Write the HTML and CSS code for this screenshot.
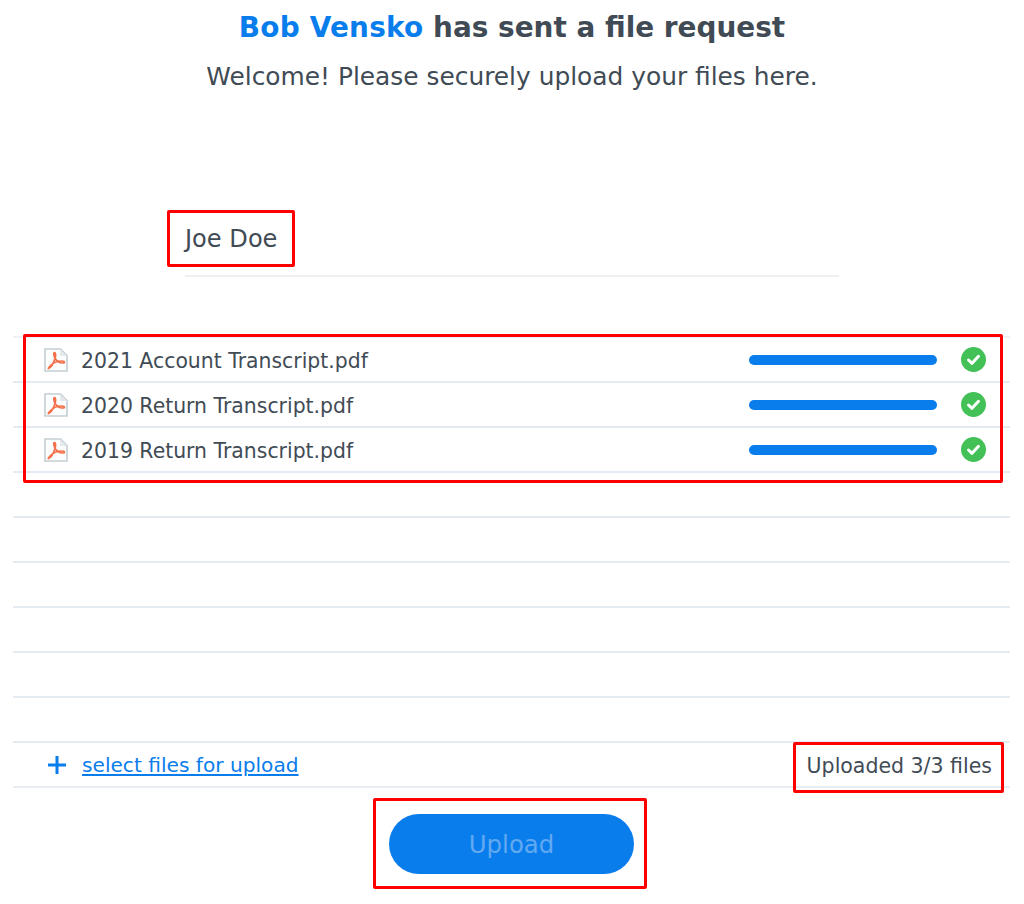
FILE: index.html
```html
<!DOCTYPE html>
<html lang="en">
<head>
    <meta charset="UTF-8">
    <meta name="viewport" content="width=device-width, initial-scale=1.0">
    <title>File request</title>
    <link rel="stylesheet" href="styles.css">
</head>
<body>
    <svg class="sprites" width="0" height="0">
        <symbol id="pdf" viewBox="0 0 24 24">
            <path d="M1 1H16.500L23 7.500V23H1Z" fill="#fcfdfd" stroke="#c3ced3" stroke-width="1.600"/>
            <path d="M16 1V8H23" fill="#e4eaec" stroke="none"/>
            <path d="M4.500 20.500C7 19.500 9.800 14.500 11.300 9.500C11.900 7 11.600 4.500 10.500 4.500C9.400 4.500 9.500 8 11.500 11C13.500 14 16.500 15.500 20 14.800C21 14.300 20 13 18 13C14 13 9 15 6.500 17.500C5 19 3.800 20.800 4.500 20.500Z" fill="none" stroke="#f4704a" stroke-width="1.700"/>
        </symbol>
        <symbol id="done" viewBox="0 0 25 25">
            <circle cx="12.500" cy="12.500" r="12.500" fill="#43c157"/>
            <path d="M7.500 13L11 16.300L17.500 9.300" fill="none" stroke="#fff" stroke-width="3" stroke-linecap="round" stroke-linejoin="round"/>
        </symbol>
    </svg>

    <h1 class="title"><span class="sender">Bob Vensko</span> has sent a file request</h1>
    <p class="welcome">Welcome! Please securely upload your files here.</p>

    <div class="name-field">
        <div class="name-value">Joe Doe</div>
        <div class="mark mark-name"></div>
    </div>

    <div class="file-area">
        <div class="file-row">
            <svg class="file-icon"><use href="#pdf"/></svg>
            <span class="file-name">2021 Account Transcript.pdf</span>
            <span class="progress"></span>
            <svg class="done-icon"><use href="#done"/></svg>
        </div>
        <div class="file-row">
            <svg class="file-icon"><use href="#pdf"/></svg>
            <span class="file-name">2020 Return Transcript.pdf</span>
            <span class="progress"></span>
            <svg class="done-icon"><use href="#done"/></svg>
        </div>
        <div class="file-row">
            <svg class="file-icon"><use href="#pdf"/></svg>
            <span class="file-name">2019 Return Transcript.pdf</span>
            <span class="progress"></span>
            <svg class="done-icon"><use href="#done"/></svg>
        </div>
        <div class="file-row"></div>
        <div class="file-row"></div>
        <div class="file-row"></div>
        <div class="file-row"></div>
        <div class="file-row"></div>
        <div class="file-row"></div>
        <div class="file-row footer-row">
            <svg class="plus-icon" viewBox="0 0 20 20"><path d="M10 1V19M1 10H19" fill="none" stroke="#0a7ded" stroke-width="3"/></svg>
            <a class="select-link" href="#">select files for upload</a>
            <span class="status">Uploaded 3/3 files</span>
        </div>
        <div class="mark mark-files"></div>
        <div class="mark mark-status"></div>
    </div>

    <div class="actions">
        <button class="upload-btn">Upload</button>
        <div class="mark mark-upload"></div>
    </div>
</body>
</html>
```

FILE: styles.css
```css
body {
    margin: 0;
    height: 904px;
    overflow: hidden;
    background-color: white;
    color: #414b55;
    font-family: "DejaVu Sans", sans-serif;
}

.sprites {
    position: absolute;
}

.title {
    margin: 0;
    padding-top: 10px;
    height: 36px;
    line-height: 36px;
    font-size: 27.900px;
    font-weight: bold;
    text-align: center;
}

.sender {
    color: #0a7ded;
    letter-spacing: 0.200px;
}

.welcome {
    margin: 15px 0 0;
    height: 32px;
    line-height: 32px;
    font-size: 24.860px;
    text-align: center;
}

/* name input */
.name-field {
    position: relative;
    margin: 125px 0 0 185px;
    width: 654px;
    height: 57px;
    border-bottom: 2px solid #eef1f3;
    box-sizing: content-box;
}

.name-value {
    padding-top: 3px;
    line-height: 36px;
    font-size: 24.100px;
}

/* file list */
.file-area {
    position: relative;
    margin: 59px 14px 0 13px;
    border-top: 2px solid #eef2f6;
}

.file-row {
    display: flex;
    align-items: center;
    height: 43px;
    border-bottom: 2px solid #e4ebf3;
    box-sizing: content-box;
}

.file-icon {
    width: 24px;
    height: 24px;
    margin-left: 31px;
    flex-shrink: 0;
}

.file-name {
    margin-left: 13px;
    padding-top: 3px;
    font-size: 20.400px;
    flex-grow: 1;
}

.progress {
    width: 188px;
    height: 10px;
    border-radius: 5px;
    background-color: #0a7ded;
}

.done-icon {
    width: 25px;
    height: 25px;
    margin: 0 24px;
}

.footer-row {
    border-bottom-color: #e8edf3;
}

.plus-icon {
    width: 20px;
    height: 20px;
    margin-left: 34px;
}

.select-link {
    margin-left: 15px;
    padding-top: 1px;
    font-size: 20.150px;
    color: #0a7ded;
    flex-grow: 1;
}

.status {
    margin-right: 18px;
    padding-top: 2px;
    font-size: 20.500px;
}

/* upload button */
.actions {
    position: relative;
    display: flex;
    justify-content: center;
    margin-top: 26px;
}

.upload-btn {
    width: 245px;
    height: 60px;
    margin-right: 1px;
    border: none;
    border-radius: 30px;
    background-color: #0a7ded;
    color: #62a9f0;
    font-family: inherit;
    font-size: 24.400px;
}

/* red annotation boxes drawn over the screenshot */
.mark {
    position: absolute;
    border: 3px solid #ff0000;
    border-radius: 2px;
    box-sizing: border-box;
}

.mark-name {
    left: -18px;
    top: -8px;
    width: 128px;
    height: 57px;
}

.mark-files {
    left: 10px;
    top: -4px;
    width: 980px;
    height: 149px;
}

.mark-status {
    left: 780px;
    top: 404px;
    width: 211px;
    height: 51px;
}

.mark-upload {
    left: 373px;
    top: -16px;
    width: 274px;
    height: 91px;
}
```
